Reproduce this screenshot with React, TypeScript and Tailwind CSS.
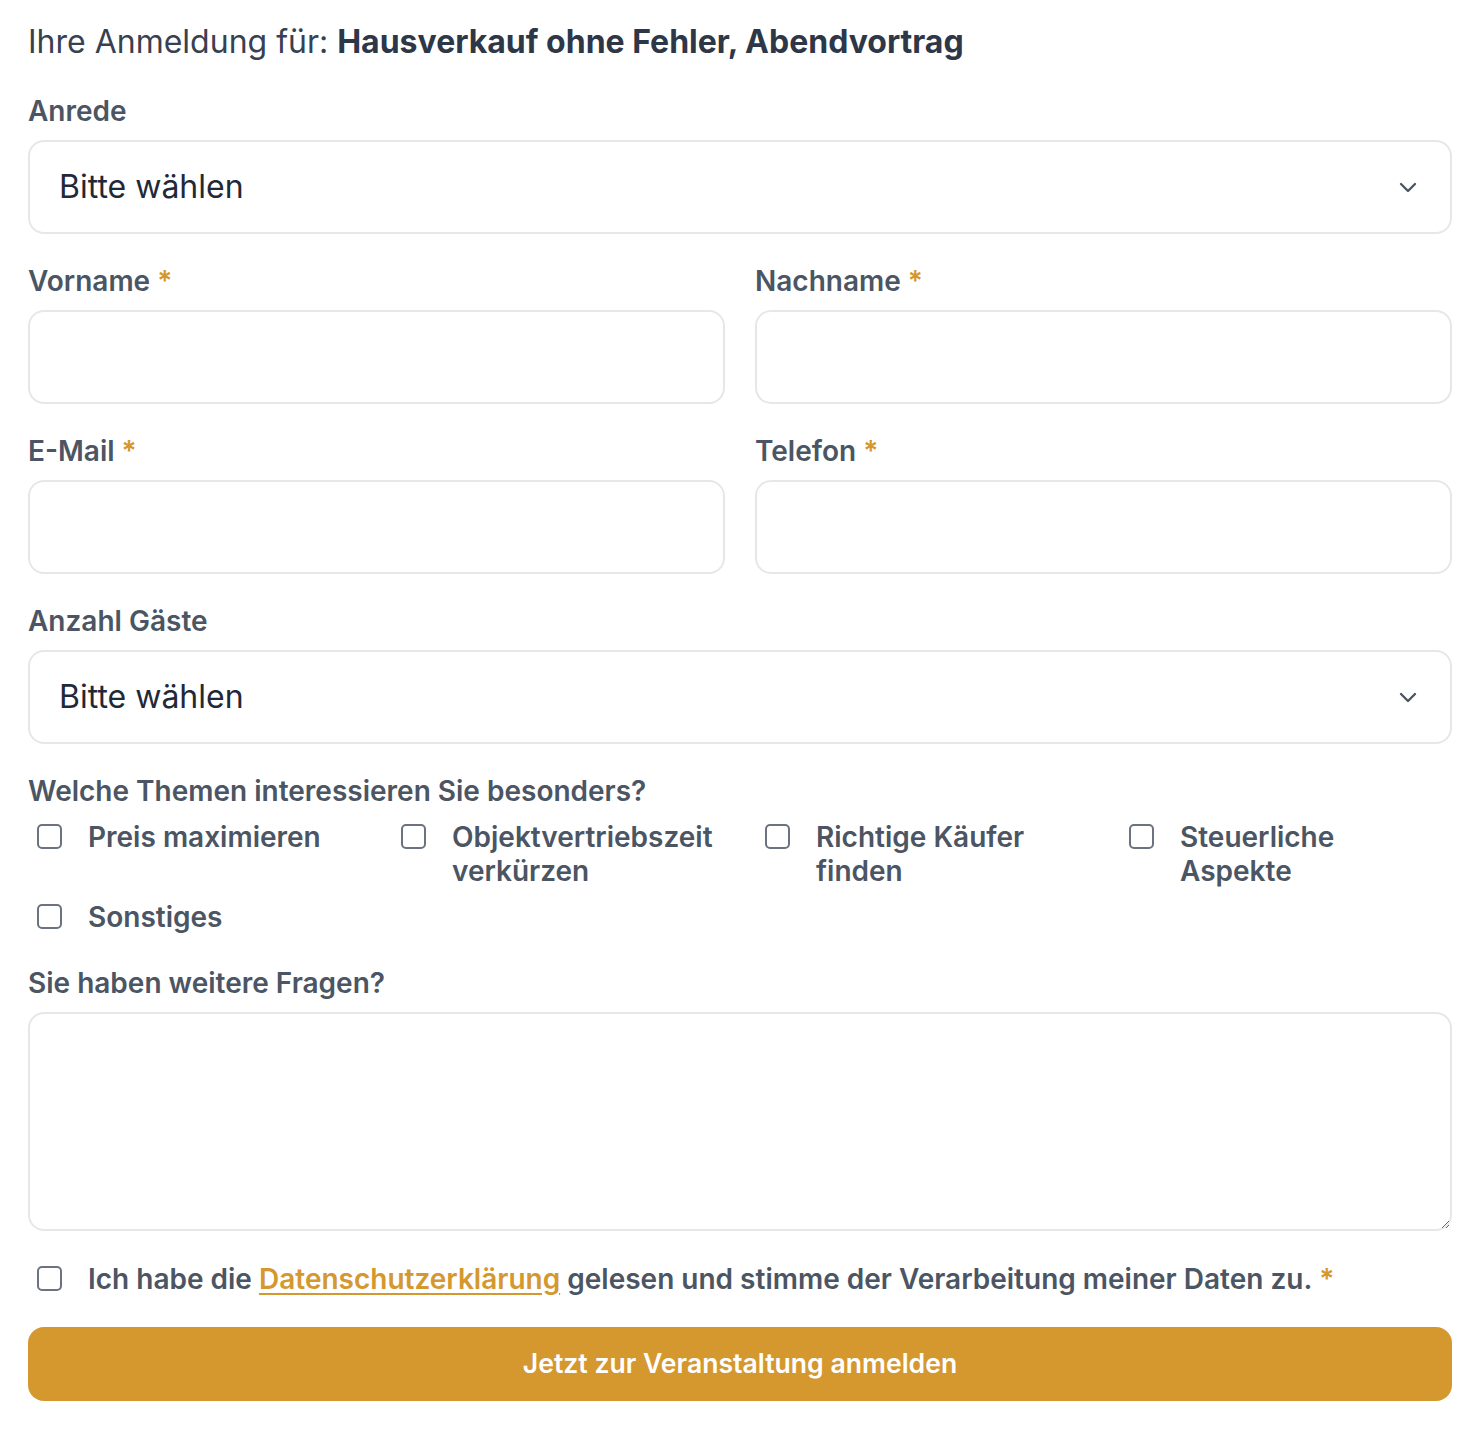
import { ChangeEvent, useState } from 'react'

const THEMEN = [
  'Preis maximieren',
  'Objektvertriebszeit verkürzen',
  'Richtige Käufer finden',
  'Steuerliche Aspekte',
  'Sonstiges',
]

const FIELD =
  'block w-full h-[94px] rounded-[16px] border-2 border-[#e5e7eb] bg-white px-[29px] text-[32px] text-[#1f2937] outline-none'

function Label({ children, required }: { children: string; required?: boolean }) {
  return (
    <label className="block text-[28px] font-semibold leading-[40px] text-[#4b5563]">
      {children}
      {required && <span className="ml-[7px] text-[#d4982f]">*</span>}
    </label>
  )
}

function Checkbox({ checked, onChange }: { checked: boolean; onChange: () => void }) {
  return (
    <button
      type="button"
      onClick={onChange}
      className="mt-[4px] ml-[9px] flex h-[25px] w-[25px] shrink-0 items-center justify-center rounded-[5px] border-2 border-[#6b7280] bg-white"
    >
      {checked && (
        <svg viewBox="0 0 16 16" className="h-4 w-4" fill="none" stroke="#374151" strokeWidth={2.5}>
          <path d="M3 8.5l3.2 3L13 4.5" />
        </svg>
      )}
    </button>
  )
}

function SelectField({ options }: { options: string[] }) {
  const [value, setValue] = useState('')
  return (
    <div className="relative">
      <select
        value={value}
        onChange={(e: ChangeEvent<HTMLSelectElement>) => setValue(e.target.value)}
        className={`${FIELD} appearance-none`}
      >
        <option value="">Bitte wählen</option>
        {options.map((o) => (
          <option key={o} value={o}>
            {o}
          </option>
        ))}
      </select>
      {/* chevron */}
      <svg
        viewBox="0 0 20 20"
        className="pointer-events-none absolute right-[34px] top-1/2 h-[20px] w-[20px] -translate-y-1/2"
        fill="none"
        stroke="#4b5563"
        strokeWidth={2.4}
        strokeLinecap="round"
        strokeLinejoin="round"
      >
        <path d="M3 7l7 7 7-7" />
      </svg>
    </div>
  )
}

export default function App() {
  const [themen, setThemen] = useState<string[]>([])
  const [consent, setConsent] = useState(false)

  function toggle(t: string) {
    setThemen((cur) => (cur.includes(t) ? cur.filter((x) => x !== t) : cur.concat(t)))
  }

  return (
    <div className="min-h-[1429px] bg-white px-[28px] pt-[20px] font-['Inter',sans-serif]">
      <h2 className="text-[32px] leading-[44px] text-[#374151]">
        Ihre Anmeldung für: <span className="font-bold text-[#2d3748]">Hausverkauf ohne Fehler, Abendvortrag</span>
      </h2>

      <form className="mt-[27px] flex flex-col gap-[27px]" onSubmit={(e) => e.preventDefault()}>
        <div className="flex flex-col gap-[9px]">
          <Label>Anrede</Label>
          <SelectField options={['Herr', 'Frau', 'Divers']} />
        </div>

        <div className="grid grid-cols-2 gap-x-[30px] gap-y-[27px]">
          <div className="flex flex-col gap-[9px]">
            <Label required>Vorname</Label>
            <input className={FIELD} />
          </div>
          <div className="flex flex-col gap-[9px]">
            <Label required>Nachname</Label>
            <input className={FIELD} />
          </div>
          <div className="flex flex-col gap-[9px]">
            <Label required>E-Mail</Label>
            <input type="email" className={FIELD} />
          </div>
          <div className="flex flex-col gap-[9px]">
            <Label required>Telefon</Label>
            <input type="tel" className={FIELD} />
          </div>
        </div>

        <div className="flex flex-col gap-[9px]">
          <Label>Anzahl Gäste</Label>
          <SelectField options={['1', '2', '3', '4']} />
        </div>

        <div className="flex flex-col gap-[9px]">
          <Label>Welche Themen interessieren Sie besonders?</Label>
          <div className="grid grid-cols-4 gap-x-[32px] gap-y-[12px]">
            {THEMEN.map((t) => (
              <div key={t} className="flex items-start gap-[26px]">
                <Checkbox checked={themen.includes(t)} onChange={() => toggle(t)} />
                <span className="text-[28px] font-semibold leading-[34px] text-[#4b5563]">{t}</span>
              </div>
            ))}
          </div>
        </div>

        <div className="mt-[2px] flex flex-col gap-[9px]">
          <Label>Sie haben weitere Fragen?</Label>
          <textarea className="block h-[219px] w-full rounded-[16px] border-2 border-[#e5e7eb] bg-white px-[29px] py-[20px] text-[28px] text-[#1f2937] outline-none" />
        </div>

        <div className="mt-[4px] flex items-start gap-[26px]">
          <Checkbox checked={consent} onChange={() => setConsent((v) => !v)} />
          <span className="text-[28px] font-semibold leading-[34px] text-[#4b5563]">
            Ich habe die{' '}
            <a href="#" className="text-[#d4982f] underline underline-offset-4">
              Datenschutzerklärung
            </a>{' '}
            gelesen und stimme der Verarbeitung meiner Daten zu.
            <span className="ml-[7px] text-[#d4982f]">*</span>
          </span>
        </div>

        <button
          type="submit"
          className="mt-[4px] h-[74px] w-full rounded-[16px] bg-[#d4982f] text-[26.6px] font-semibold text-white"
        >
          Jetzt zur Veranstaltung anmelden
        </button>
      </form>
    </div>
  )
}
